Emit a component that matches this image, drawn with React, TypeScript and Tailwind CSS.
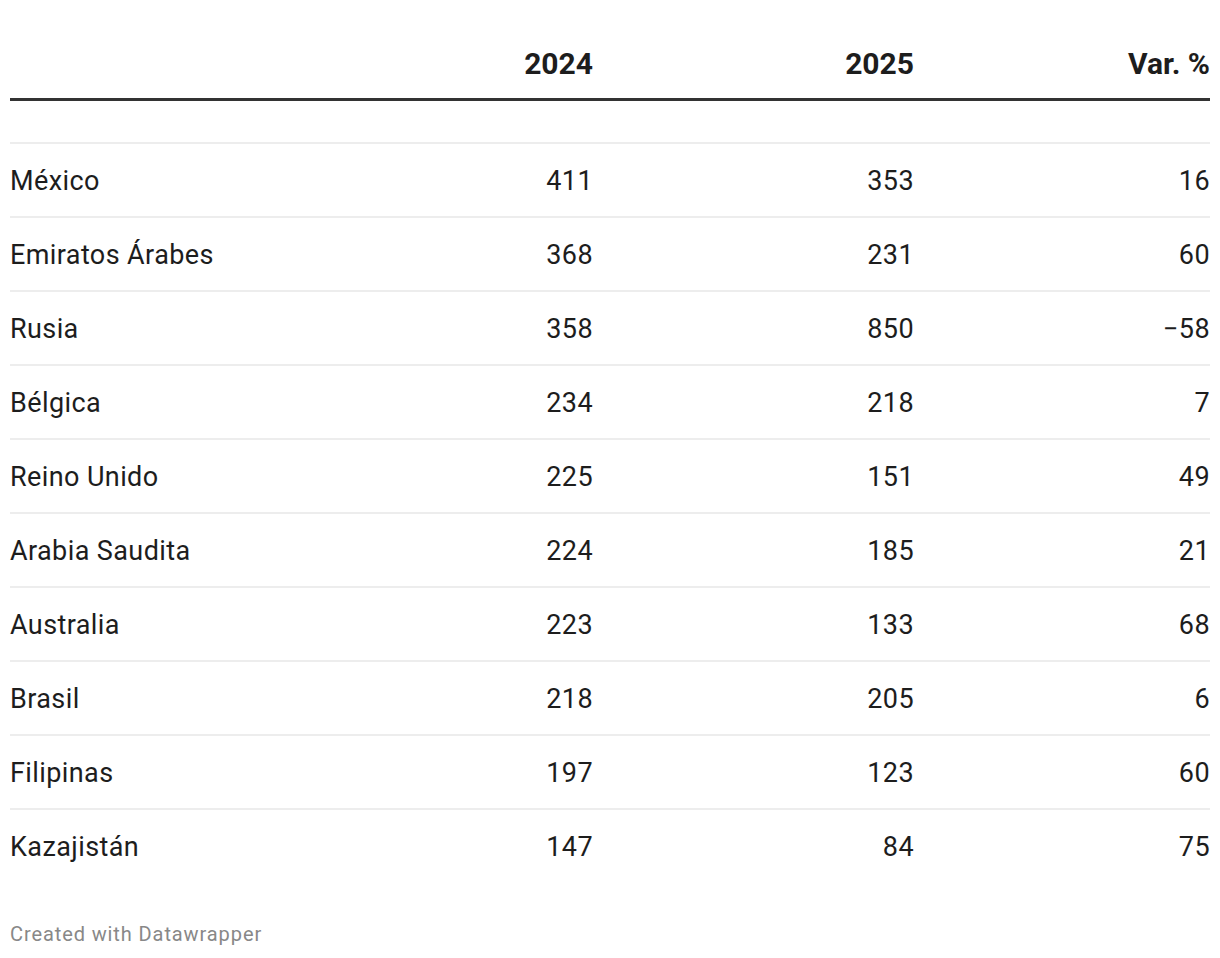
const ROWS = [
  { country: "México", y2024: "411", y2025: "353", change: "16" },
  { country: "Emiratos Árabes", y2024: "368", y2025: "231", change: "60" },
  { country: "Rusia", y2024: "358", y2025: "850", change: "−58" },
  { country: "Bélgica", y2024: "234", y2025: "218", change: "7" },
  { country: "Reino Unido", y2024: "225", y2025: "151", change: "49" },
  { country: "Arabia Saudita", y2024: "224", y2025: "185", change: "21" },
  { country: "Australia", y2024: "223", y2025: "133", change: "68" },
  { country: "Brasil", y2024: "218", y2025: "205", change: "6" },
  { country: "Filipinas", y2024: "197", y2025: "123", change: "60" },
  { country: "Kazajistán", y2024: "147", y2025: "84", change: "75" },
];

const COLS = "grid grid-cols-[263px_320px_321px_296px]";

export default function App() {
  return (
    <div className="min-h-screen bg-white px-[10px] font-['Roboto',sans-serif] text-[#1d1d1d]">
      <div className={`${COLS} pt-[49px] pb-[19px] border-b-[3px] border-[#333333] text-[30px] leading-[30px] font-bold`}>
        <div />
        <div className="text-right">2024</div>
        <div className="text-right">2025</div>
        <div className="text-right">Var. %</div>
      </div>

      <div className="pt-[41px]">
        {ROWS.map((row) => (
          <div
            key={row.country}
            className={`${COLS} border-t-2 border-[#ededed] h-[74px] pt-px items-start text-[27px] leading-[72px] tracking-[0.4px]`}
          >
            <div>{row.country}</div>
            <div className="text-right">{row.y2024}</div>
            <div className="text-right">{row.y2025}</div>
            <div className="text-right">{row.change}</div>
          </div>
        ))}
      </div>

      <div className="pt-[40px] text-[20px] leading-[24px] tracking-[0.9px] text-[#888888]">
        Created with Datawrapper
      </div>
    </div>
  );
}
